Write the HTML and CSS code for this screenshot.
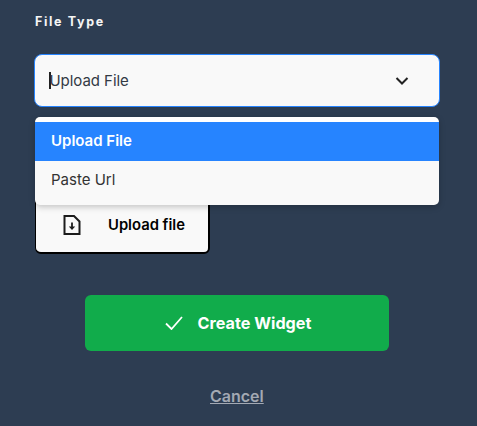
FILE: index.html
```html
<!DOCTYPE html>
<html lang="en">
<head>
    <meta charset="UTF-8">
    <meta name="viewport" content="width=device-width, initial-scale=1.0">
    <title>File Type</title>
    <link rel="stylesheet" href="styles.css">
</head>
<body>
    <div class="form">
        <label class="field-label">File Type</label>
        <div class="select-wrap">
            <div class="select-control">
                <span class="caret"></span>
                <span class="select-value">Upload File</span>
                <svg class="chevron" width="16" height="16" viewBox="0 0 16 16" fill="none" stroke="#222" stroke-width="2">
                    <path d="M2.5 5l5.5 5.500 5.500-5.500"/>
                </svg>
            </div>
            <ul class="select-menu">
                <li class="option active">Upload File</li>
                <li class="option">Paste Url</li>
            </ul>
        </div>
        <button class="upload-btn">
            <svg width="20" height="22" viewBox="0 0 20 22" fill="none" stroke="#1c1c1c" stroke-width="2">
                <path d="M2.500 2h9.500l5.500 5.500v12.500h-15z"/>
                <path d="M10 8.500v4.500" stroke-width="1.800"/>
                <path d="M6.800 12.500h6.400l-3.200 3.500z" fill="#1c1c1c" stroke="none"/>
            </svg>
            <span>Upload file</span>
        </button>
        <button class="create-btn">
            <svg width="18" height="14" viewBox="0 0 18 14" fill="none" stroke="#fff" stroke-width="1.800">
                <path d="M1 7.500l5.500 5.500 10.500-12"/>
            </svg>
            <span>Create Widget</span>
        </button>
        <a class="cancel" href="#">Cancel</a>
    </div>
</body>
</html>
```

FILE: styles.css
```css
html, body {
    height: 100%;
}
body {
    margin: 0;
    background-color: #2d3d52;
    font-family: Inter, "Liberation Sans", sans-serif;
    overflow: hidden;
}
.form {
    display: flex;
    flex-direction: column;
    padding: 14px 37px 0 34px;
}
.field-label {
    color: #f5f5f5;
    font-size: 12.500px;
    font-weight: 700;
    letter-spacing: 1.650px;
    line-height: 15px;
    margin: 0 0 25px 1px;
}
.select-wrap {
    position: relative;
}
.select-control {
    display: flex;
    align-items: center;
    box-sizing: border-box;
    height: 53px;
    padding: 0 30px 0 14px;
    background-color: #f9f9f9;
    border: 1.500px solid #2684ff;
    border-radius: 8px;
    color: #333a45;
    font-size: 15px;
    letter-spacing: -0.050px;
}
.caret {
    width: 1.500px;
    height: 17px;
    margin-right: -1px;
    background-color: #222;
}
.select-value {
    flex: 1;
}
.chevron {
    margin-right: -1px;
}
.select-menu {
    position: absolute;
    top: 63px;
    left: 1px;
    right: 1px;
    margin: 0;
    padding: 5px 0 0;
    height: 88px;
    box-sizing: border-box;
    list-style: none;
    background-color: #f9f9f9;
    background-image: linear-gradient(#fff 5px, transparent 5px);
    border-radius: 5px;
    box-shadow: 0 2px 6px rgba(0, 0, 0, 0.22);
    overflow: hidden;
    font-size: 15px;
    color: #333;
}
.option {
    padding: 0 16px;
    height: 39px;
    line-height: 38px;
}
.active {
    background-color: #2684ff;
    color: #fff;
    font-weight: 600;
}
.upload-btn {
    display: flex;
    align-items: center;
    box-sizing: border-box;
    width: 175px;
    height: 64px;
    margin: 83px 0 0 1px;
    padding: 6px 0 0 26px;
    gap: 26px;
    background-color: #f9f9f9;
    border: 1px solid #000;
    border-width: 1px 2px 2px 1px;
    border-radius: 6px;
    font-family: inherit;
    font-size: 14.800px;
    font-weight: 600;
    color: #000;
}
.create-btn {
    display: flex;
    align-items: center;
    justify-content: center;
    gap: 15px;
    width: 304px;
    height: 56px;
    margin: 41px 0 0 51px;
    padding: 0 0 0 2px;
    background-color: #11ac4b;
    border: none;
    border-radius: 6px;
    font-family: inherit;
    font-size: 16.200px;
    font-weight: 700;
    color: #fff;
}
.cancel {
    align-self: flex-start;
    margin: 36px 0 0 176px;
    color: #a3a9b3;
    font-size: 16px;
    font-weight: 600;
    line-height: 19px;
}
```
